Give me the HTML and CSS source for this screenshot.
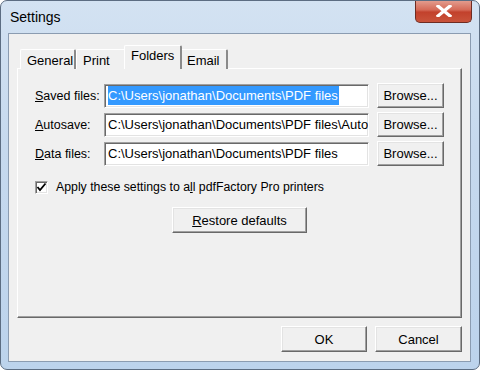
FILE: index.html
```html
<!DOCTYPE html>
<html lang="en">
<head>
    <meta charset="UTF-8">
    <title>Settings</title>
    <link rel="stylesheet" href="styles.css">
</head>
<body>
    <div class="window">
        <div class="titlebar">
            <span class="title">Settings</span>
            <div class="close-btn">
                <svg width="16" height="12" viewBox="0 0 16 12">
                    <path d="M2 1 L14 11 M14 1 L2 11" stroke="#ffffff" stroke-width="3.2" stroke-linecap="square"/>
                </svg>
            </div>
        </div>

        <div class="client">
            <div class="tabs">
                <div class="tab tab-general">General</div>
                <div class="tab tab-print">Print</div>
                <div class="tab tab-folders active">Folders</div>
                <div class="tab tab-email">Email</div>
            </div>

            <div class="panel">
                <div class="row">
                    <span class="label"><u>S</u>aved files:</span>
                    <div class="field"><span class="selected">C:\Users\jonathan\Documents\PDF files</span></div>
                    <div class="button browse">Browse...</div>
                </div>
                <div class="row">
                    <span class="label"><u>A</u>utosave:</span>
                    <div class="field">C:\Users\jonathan\Documents\PDF files\Autosave</div>
                    <div class="button browse">Browse...</div>
                </div>
                <div class="row">
                    <span class="label"><u>D</u>ata files:</span>
                    <div class="field">C:\Users\jonathan\Documents\PDF files</div>
                    <div class="button browse">Browse...</div>
                </div>

                <div class="check-row">
                    <div class="checkbox">
                        <svg width="11" height="11" viewBox="0 0 11 11">
                            <path d="M1.5 5 L4 8 L9.5 1.5" stroke="#000" stroke-width="1.8" fill="none"/>
                        </svg>
                    </div>
                    <span class="check-text">Apply these settings to a<u>l</u>l pdfFactory Pro printers</span>
                </div>

                <div class="center">
                    <div class="button restore"><u>R</u>estore defaults</div>
                </div>
            </div>

            <div class="footer">
                <div class="button ok">OK</div>
                <div class="button cancel">Cancel</div>
            </div>
        </div>
    </div>
</body>
</html>
```

FILE: styles.css
```css
body {
    margin: 0;
    font-family: "Liberation Sans", Arial, sans-serif;
    font-size: 13px;
    color: #000;
}

.window {
    width: 480px;
    height: 370px;
    box-sizing: border-box;
    border: 1px solid #5c6d82;
    border-radius: 7px;
    background: linear-gradient(180deg, #d3e2f2 0%, #c6d9ee 40%, #bcd3ec 100%);
    display: flex;
    flex-direction: column;
    overflow: hidden;
}

.titlebar {
    height: 32px;
    display: flex;
    justify-content: space-between;
    align-items: flex-start;
}

.title {
    font-size: 14px;
    margin: 8px 0 0 9px;
}

.close-btn {
    width: 55px;
    height: 22px;
    margin: -1px 7px 0 0;
    border: 1px solid #6e2c22;
    border-top: none;
    border-radius: 0 0 5px 5px;
    background: linear-gradient(180deg, #e4a193 0%, #d56a57 45%, #c2412c 55%, #c9533b 100%);
    display: flex;
    justify-content: center;
    align-items: center;
}

.client {
    flex: 1;
    margin: 0 8px 7px 7px;
    border: 1px solid #8b9cb1;
    background: #f0f0f0;
    display: flex;
    flex-direction: column;
}

.tabs {
    display: flex;
    align-items: flex-end;
    height: 34px;
    padding-left: 11px;
    position: relative;
    z-index: 1;
}

.tab {
    height: 20px;
    box-sizing: border-box;
    border-top: 1px solid #fff;
    border-left: 1px solid #fff;
    border-right: 2px solid #8a8a8a;
    border-radius: 2px 2px 0 0;
    padding: 3px 0 0 6px;
    background: #f0f0f0;
    margin-bottom: -1px;
}

.tab-general { width: 56px; }
.tab-print { width: 50px; border-right-color: #f0f0f0; }
.tab-email { width: 48px; }

.tab.active {
    width: 58px;
    height: 24px;
    margin-left: -2px;
    margin-right: -2px;
    padding-top: 2px;
    position: relative;
    z-index: 2;
}

.panel {
    height: 250px;
    margin: 0 8px 0 8px;
    box-sizing: border-box;
    border-top: 1px solid #fff;
    border-left: 1px solid #fff;
    border-right: 1px solid #696969;
    border-bottom: 1px solid #696969;
    box-shadow: inset -1px -1px #a0a0a0;
    padding: 14px 0 0 17px;
    display: flex;
    flex-direction: column;
    gap: 4px;
}

.row {
    display: flex;
    align-items: center;
    height: 25px;
}

.label {
    width: 69px;
    font-size: 12.5px;
}

.field {
    width: 265px;
    height: 24px;
    box-sizing: border-box;
    border-top: 1px solid #a0a0a0;
    border-left: 1px solid #a0a0a0;
    border-right: 1px solid #fff;
    border-bottom: 1px solid #fff;
    box-shadow: inset 1px 1px #696969, inset -1px -1px #e3e3e3;
    background: #fff;
    padding: 0 0 0 3px;
    line-height: 22px;
    white-space: nowrap;
    overflow: hidden;
}

.selected {
    background: #3399ff;
    color: #fff;
    padding: 2px 1px 2px 0;
}

.button {
    box-sizing: border-box;
    background: #f0f0f0;
    border: 1px solid;
    border-color: #fff #696969 #696969 #fff;
    box-shadow: inset -1px -1px #a0a0a0, inset 1px 1px #e3e3e3;
    display: flex;
    justify-content: center;
    align-items: center;
}

.browse {
    width: 67px;
    height: 25px;
    margin-left: 8px;
}

.check-row {
    display: flex;
    align-items: center;
    gap: 8px;
    margin-top: 9px;
    height: 16px;
}

.check-text {
    font-size: 12.3px;
}

.checkbox {
    width: 13px;
    height: 13px;
    box-sizing: border-box;
    border-top: 1px solid #a0a0a0;
    border-left: 1px solid #a0a0a0;
    border-right: 1px solid #fff;
    border-bottom: 1px solid #fff;
    box-shadow: inset 1px 1px #696969, inset -1px -1px #e3e3e3;
    background: #fff;
    display: flex;
    justify-content: center;
    align-items: center;
}

.center {
    display: flex;
    justify-content: center;
    margin: 8px 0 0 -17px;
}

.restore {
    width: 135px;
    height: 26px;
}

.footer {
    display: flex;
    justify-content: flex-end;
    gap: 8px;
    margin: 8px 8px 0 0;
}

.ok {
    width: 86px;
    height: 26px;
}

.cancel {
    width: 87px;
    height: 26px;
}
```
